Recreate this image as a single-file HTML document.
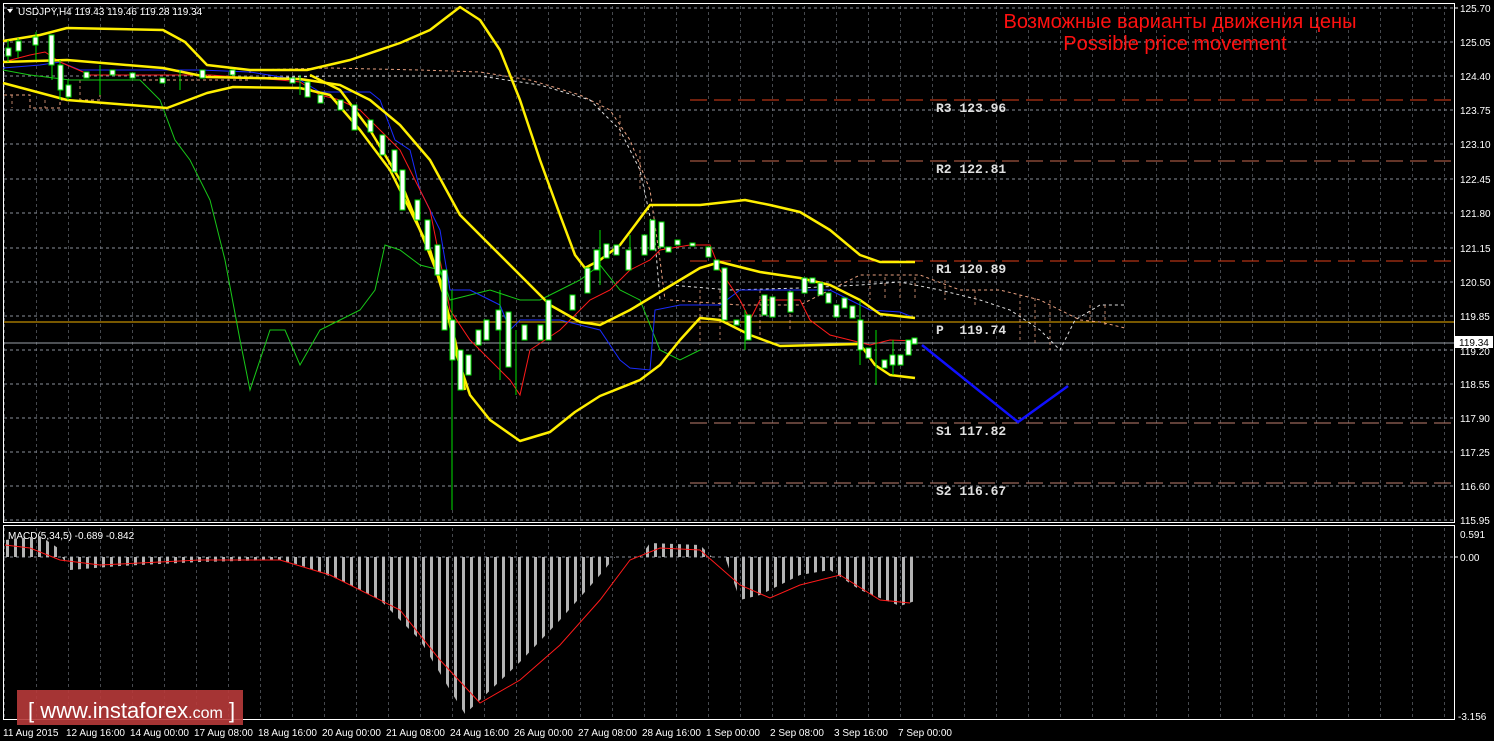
<!DOCTYPE html>
<html><head><meta charset="utf-8"><style>
html,body{margin:0;padding:0;background:#000;width:1494px;height:741px;overflow:hidden}
svg{display:block}
text{font-family:"Liberation Sans",sans-serif}
text.m{font-family:"Liberation Mono",monospace}
</style></head><body>
<svg width="1494" height="741" viewBox="0 0 1494 741" xmlns="http://www.w3.org/2000/svg">
<defs>
<pattern id="gx" width="32" height="741" patternUnits="userSpaceOnUse" x="4">
<line x1="0" y1="0" x2="0" y2="741" stroke="#8a8f9a" stroke-width="1" stroke-dasharray="3,3"/>
</pattern>
<pattern id="st" width="8" height="800" patternUnits="userSpaceOnUse" x="6">
<rect x="0" y="0" width="3" height="800" fill="#b4b4b4"/>
</pattern>
</defs>
<rect width="1494" height="741" fill="#000"/>
<rect x="4" y="4" width="1450" height="518" fill="url(#gx)"/>
<rect x="4" y="528" width="1450" height="191" fill="url(#gx)"/>
<g stroke="#8a8f9a" stroke-dasharray="3,3" stroke-width="1">
<line x1="4" x2="1454" y1="8" y2="8"/><line x1="4" x2="1454" y1="42" y2="42"/>
<line x1="4" x2="1454" y1="76" y2="76"/><line x1="4" x2="1454" y1="110" y2="110"/>
<line x1="4" x2="1454" y1="144" y2="144"/><line x1="4" x2="1454" y1="179" y2="179"/>
<line x1="4" x2="1454" y1="213" y2="213"/><line x1="4" x2="1454" y1="248" y2="248"/>
<line x1="4" x2="1454" y1="282" y2="282"/><line x1="4" x2="1454" y1="316" y2="316"/>
<line x1="4" x2="1454" y1="350" y2="350"/><line x1="4" x2="1454" y1="384" y2="384"/>
<line x1="4" x2="1454" y1="418" y2="418"/><line x1="4" x2="1454" y1="452" y2="452"/>
<line x1="4" x2="1454" y1="486" y2="486"/><line x1="4" x2="1454" y1="520" y2="520"/>
<line x1="4" x2="1454" y1="557" y2="557"/>
</g>
<rect x="3.5" y="3.5" width="1451" height="519" fill="none" stroke="#fff"/>
<rect x="3.5" y="525.5" width="1451" height="194" fill="none" stroke="#fff"/>
<g fill="#fff" font-size="10">
<text x="1460" y="12">125.70</text><text x="1460" y="46">125.05</text><text x="1460" y="80">124.40</text>
<text x="1460" y="114">123.75</text><text x="1460" y="148">123.10</text><text x="1460" y="183">122.45</text>
<text x="1460" y="217">121.80</text><text x="1460" y="252">121.15</text><text x="1460" y="286">120.50</text>
<text x="1460" y="320">119.85</text><text x="1460" y="355">119.20</text><text x="1460" y="388">118.55</text>
<text x="1460" y="422">117.90</text><text x="1460" y="456">117.25</text><text x="1460" y="490">116.60</text>
<text x="1460" y="524">115.95</text><text x="1460" y="538">0.591</text><text x="1460" y="561">0.00</text>
<text x="1458" y="720">-3.156</text>
</g>
<g stroke="#fff"><line x1="1454" x2="1458" y1="8" y2="8"/><line x1="1454" x2="1458" y1="557" y2="557"/></g>
<rect x="1455" y="336" width="38" height="12" fill="#fff"/>
<text x="1459" y="346" font-size="10" fill="#000">119.34</text>
<g fill="#fff" font-size="10">
<text x="3" y="736">11 Aug 2015</text><text x="66" y="736">12 Aug 16:00</text><text x="130" y="736">14 Aug 00:00</text>
<text x="194" y="736">17 Aug 08:00</text><text x="258" y="736">18 Aug 16:00</text><text x="322" y="736">20 Aug 00:00</text>
<text x="386" y="736">21 Aug 08:00</text><text x="450" y="736">24 Aug 16:00</text><text x="514" y="736">26 Aug 00:00</text>
<text x="578" y="736">27 Aug 08:00</text><text x="642" y="736">28 Aug 16:00</text><text x="706" y="736">1 Sep 00:00</text>
<text x="770" y="736">2 Sep 08:00</text><text x="834" y="736">3 Sep 16:00</text><text x="898" y="736">7 Sep 00:00</text>
</g>
<line x1="690" x2="1454" y1="100" y2="100" stroke="#e0401a" stroke-width="1" stroke-dasharray="17,7"/>
<line x1="690" x2="1454" y1="161" y2="161" stroke="#c86a50" stroke-dasharray="17,7"/>
<line x1="690" x2="1454" y1="261" y2="261" stroke="#e0401a" stroke-dasharray="17,7"/>
<line x1="690" x2="1454" y1="423" y2="423" stroke="#c08070" stroke-dasharray="17,7"/>
<line x1="690" x2="1454" y1="483" y2="483" stroke="#c08070" stroke-dasharray="17,7"/>
<line x1="4" x2="1454" y1="322" y2="322" stroke="#f0b000"/>
<line x1="4" x2="1454" y1="343" y2="343" stroke="#9aa0a8"/>
<g fill="#e0e0e0" font-size="13" font-weight="bold">
<text class="m" x="936" y="112">R3 123.96</text>
<text class="m" x="936" y="173">R2 122.81</text>
<text class="m" x="936" y="273">R1 120.89</text>
<text class="m" x="936" y="334" xml:space="preserve">P  119.74</text>
<text class="m" x="936" y="435">S1 117.82</text>
<text class="m" x="936" y="495">S2 116.67</text>
</g>
<g fill="none" stroke-dasharray="3,3" stroke-width="1">
<polyline stroke="#e8a080" points="4,95 30,95 30,108 60,108 60,100 100,100 100,80 250,80 250,70 330,68 420,70 480,72 530,80 580,95 610,110 630,140 650,190 660,260 665,300"/>
<polyline stroke="#ddd" points="250,78 330,76 420,76 480,76 540,85 590,100 620,130 640,170 655,240 660,300"/>
<polyline stroke="#ddd" points="670,285 730,290 800,288 860,285 900,282 940,290 980,300 1010,310 1040,330 1060,350 1075,320 1100,305 1125,305"/>
<polyline stroke="#e8a080" points="670,300 740,305 800,305 860,275 920,275 960,290 1000,290 1040,300 1060,310 1080,320 1100,322 1125,328"/>
</g>
<g stroke="#e8a080" stroke-dasharray="3,3" stroke-width="1" opacity="0.8">
<line x1="870" y1="280" x2="870" y2="300"/><line x1="885" y1="277" x2="885" y2="300"/><line x1="900" y1="277" x2="900" y2="300"/>
<line x1="915" y1="277" x2="915" y2="300"/><line x1="945" y1="280" x2="945" y2="300"/><line x1="975" y1="290" x2="975" y2="305"/>
<line x1="1020" y1="295" x2="1020" y2="340"/><line x1="1035" y1="298" x2="1035" y2="345"/><line x1="1050" y1="300" x2="1050" y2="350"/>
<line x1="1090" y1="305" x2="1090" y2="322"/><line x1="1105" y1="305" x2="1105" y2="325"/>
<line x1="700" y1="290" x2="700" y2="345"/><line x1="720" y1="290" x2="720" y2="340"/><line x1="760" y1="290" x2="760" y2="335"/><line x1="790" y1="290" x2="790" y2="330"/>
<line x1="600" y1="100" x2="600" y2="110"/><line x1="620" y1="115" x2="620" y2="140"/><line x1="640" y1="150" x2="640" y2="190"/>
<line x1="12" y1="95" x2="12" y2="108"/><line x1="45" y1="100" x2="45" y2="108"/><line x1="80" y1="80" x2="80" y2="100"/>
</g>
<polyline fill="none" stroke="#18c818" stroke-width="1" points="3,70 30,75 70,80 140,80 160,100 175,140 190,160 210,200 225,260 240,340 250,390 270,330 285,330 300,365 320,330 340,320 360,310 375,290 385,245 400,250 420,265 440,270 450,300 470,295 490,290 520,300 540,300 560,290 580,280 600,265 620,290 640,300 660,350 680,360 700,350"/>
<polyline fill="none" stroke="#1a2cff" stroke-width="1" points="3,68 40,65 60,62 80,70 200,70 250,72 300,80 320,92 370,92 380,100 395,140 410,150 420,190 440,230 450,290 470,290 490,300 500,305 510,330 520,320 560,320 600,330 620,360 630,368 650,370 655,310 680,305 720,305 740,290 780,290 830,290 850,300 870,310 900,312 915,318"/>
<polyline fill="none" stroke="#ff1a1a" stroke-width="1" points="3,62 30,55 45,52 60,62 90,75 150,75 210,75 280,80 300,82 320,95 340,100 360,110 380,130 400,150 420,190 430,210 440,260 450,310 470,340 490,360 510,380 520,395 530,350 560,330 590,300 610,290 630,270 650,260 660,250 690,245 710,245 720,270 740,300 750,320 760,300 800,300 810,320 830,335 850,340 870,345 890,340 915,341"/>
<g fill="none" stroke="#ffef00" stroke-width="2.5" stroke-linejoin="round">
<polyline points="3,41 40,35 67,28 163,30 185,42 207,65 250,70 307,70 350,60 400,43 430,30 460,7 480,20 500,50 520,100 540,160 560,215 575,255 585,268 600,260 620,245 650,205 700,205 745,200 770,205 800,212 830,230 860,255 880,262 915,262"/>
<polyline points="3,62 67,60 163,68 207,77 300,79 340,85 370,100 400,125 430,160 460,215 490,245 520,275 550,305 580,322 600,325 630,310 660,292 680,280 700,268 720,262 760,272 800,278 830,285 860,300 880,314 915,318"/>
<polyline points="3,83 67,100 167,108 207,93 233,87 300,88 330,95 360,130 390,170 410,210 430,250 445,300 455,350 470,395 490,420 520,441 550,432 575,412 600,396 640,380 660,365 680,340 700,318 720,320 750,335 780,346 820,345 860,344 875,365 890,375 915,378"/>
<polyline points="310,75 340,90 370,130 400,180 420,230 440,280 455,340 465,390"/>
</g>
<g stroke="#00e000" stroke-width="1">
<line x1="8" y1="40" x2="8" y2="62"/><line x1="18" y1="38" x2="18" y2="58"/><line x1="36" y1="32" x2="36" y2="60"/>
<line x1="52" y1="35" x2="52" y2="80"/><line x1="60" y1="60" x2="60" y2="100"/><line x1="68" y1="80" x2="68" y2="100"/>
<line x1="100" y1="65" x2="100" y2="95"/><line x1="180" y1="70" x2="180" y2="90"/><line x1="300" y1="75" x2="300" y2="95"/>
<line x1="452" y1="290" x2="452" y2="510"/><line x1="500" y1="290" x2="500" y2="380"/><line x1="516" y1="330" x2="516" y2="395"/>
<line x1="600" y1="230" x2="600" y2="285"/><line x1="630" y1="235" x2="630" y2="270"/><line x1="745" y1="310" x2="745" y2="350"/>
<line x1="860" y1="300" x2="860" y2="365"/><line x1="876" y1="330" x2="876" y2="385"/><line x1="893" y1="340" x2="893" y2="375"/>
</g>
<g fill="#fff" stroke="#00e000" stroke-width="1">
<rect x="6" y="48" width="5" height="8"/><rect x="16" y="41" width="5" height="10"/><rect x="33" y="37" width="5" height="8"/>
<rect x="49" y="35" width="5" height="30"/><rect x="58" y="65" width="5" height="25"/><rect x="66" y="85" width="5" height="12"/>
<rect x="84" y="72" width="5" height="6"/><rect x="110" y="70" width="5" height="5"/><rect x="130" y="73" width="5" height="5"/>
<rect x="160" y="78" width="5" height="5"/><rect x="200" y="70" width="5" height="8"/><rect x="230" y="70" width="5" height="5"/>
<rect x="290" y="78" width="5" height="5"/><rect x="305" y="82" width="5" height="15"/><rect x="318" y="95" width="5" height="8"/>
<rect x="338" y="100" width="5" height="10"/><rect x="352" y="105" width="5" height="25"/><rect x="368" y="120" width="5" height="12"/>
<rect x="380" y="135" width="5" height="20"/><rect x="392" y="150" width="5" height="22"/><rect x="400" y="170" width="5" height="40"/>
<rect x="415" y="200" width="5" height="20"/><rect x="425" y="220" width="5" height="30"/><rect x="435" y="245" width="5" height="30"/>
<rect x="442" y="270" width="5" height="60"/><rect x="450" y="320" width="5" height="40"/><rect x="458" y="350" width="5" height="40"/>
<rect x="466" y="355" width="5" height="20"/><rect x="476" y="330" width="5" height="15"/><rect x="484" y="320" width="5" height="20"/>
<rect x="496" y="310" width="5" height="20"/><rect x="506" y="312" width="5" height="55"/><rect x="522" y="325" width="5" height="15"/>
<rect x="538" y="325" width="5" height="15"/><rect x="546" y="300" width="5" height="40"/><rect x="570" y="295" width="5" height="15"/>
<rect x="585" y="268" width="5" height="25"/><rect x="594" y="250" width="5" height="20"/><rect x="604" y="244" width="5" height="14"/>
<rect x="614" y="245" width="5" height="10"/><rect x="626" y="250" width="5" height="20"/><rect x="642" y="235" width="5" height="20"/>
<rect x="650" y="220" width="5" height="30"/><rect x="659" y="222" width="5" height="25"/><rect x="666" y="247" width="5" height="5"/>
<rect x="675" y="240" width="5" height="5"/><rect x="690" y="243" width="5" height="3"/><rect x="706" y="247" width="5" height="10"/>
<rect x="714" y="260" width="5" height="10"/><rect x="722" y="268" width="5" height="52"/><rect x="734" y="320" width="5" height="5"/>
<rect x="746" y="315" width="5" height="25"/><rect x="762" y="295" width="5" height="20"/><rect x="770" y="297" width="5" height="20"/>
<rect x="788" y="292" width="5" height="20"/><rect x="802" y="278" width="5" height="15"/><rect x="810" y="278" width="5" height="5"/>
<rect x="818" y="283" width="5" height="12"/><rect x="826" y="293" width="5" height="10"/><rect x="834" y="305" width="5" height="12"/>
<rect x="842" y="298" width="5" height="10"/><rect x="850" y="306" width="5" height="12"/><rect x="858" y="320" width="5" height="30"/>
<rect x="866" y="348" width="5" height="10"/><rect x="882" y="360" width="5" height="8"/><rect x="890" y="355" width="5" height="10"/>
<rect x="898" y="355" width="5" height="10"/><rect x="906" y="340" width="5" height="15"/><rect x="912" y="338" width="5" height="6"/>
</g>
<polyline fill="none" stroke="#1010ff" stroke-width="2.5" points="922,345 1018,422 1068,386"/>
<text x="1180" y="28" font-size="20" fill="#ff1010" text-anchor="middle">Возможные варианты движения цены</text>
<text x="1175" y="50" font-size="20" fill="#ff1010" text-anchor="middle">Possible price movement</text>
<path d="M7,9 L13,9 L10,13 Z" fill="#fff"/>
<text x="18" y="15" font-size="10" fill="#fff">USDJPY,H4  119.43 119.46 119.28 119.34</text>
<text x="8" y="539" font-size="10" fill="#fff">MACD(5,34,5) -0.689 -0.842</text>
<polygon fill="url(#st)" points="5,557 5,540 40,536 58,548 60,557 62,557 70,570 120,566 200,562 280,560 300,565 340,580 380,600 420,640 450,690 465,714 480,700 520,662 560,620 600,575 615,557 640,557 650,543 700,545 712,557 725,557 740,600 760,595 800,575 830,570 860,590 900,606 918,600 918,557"/>
<polyline fill="none" stroke="#ff1a1a" stroke-width="1" points="5,545 30,548 60,560 100,565 200,560 280,560 330,575 400,610 440,660 480,703 520,680 560,645 600,600 630,560 660,548 700,550 740,585 770,598 800,585 840,575 880,600 910,603"/>
<rect x="17" y="690" width="226" height="35" fill="#b73a3a" opacity="0.9"/>
<text x="28" y="718" font-size="22" fill="#fff">[ www.instaforex<tspan font-size="16">.com</tspan> ]</text>
</svg>
</body></html>
